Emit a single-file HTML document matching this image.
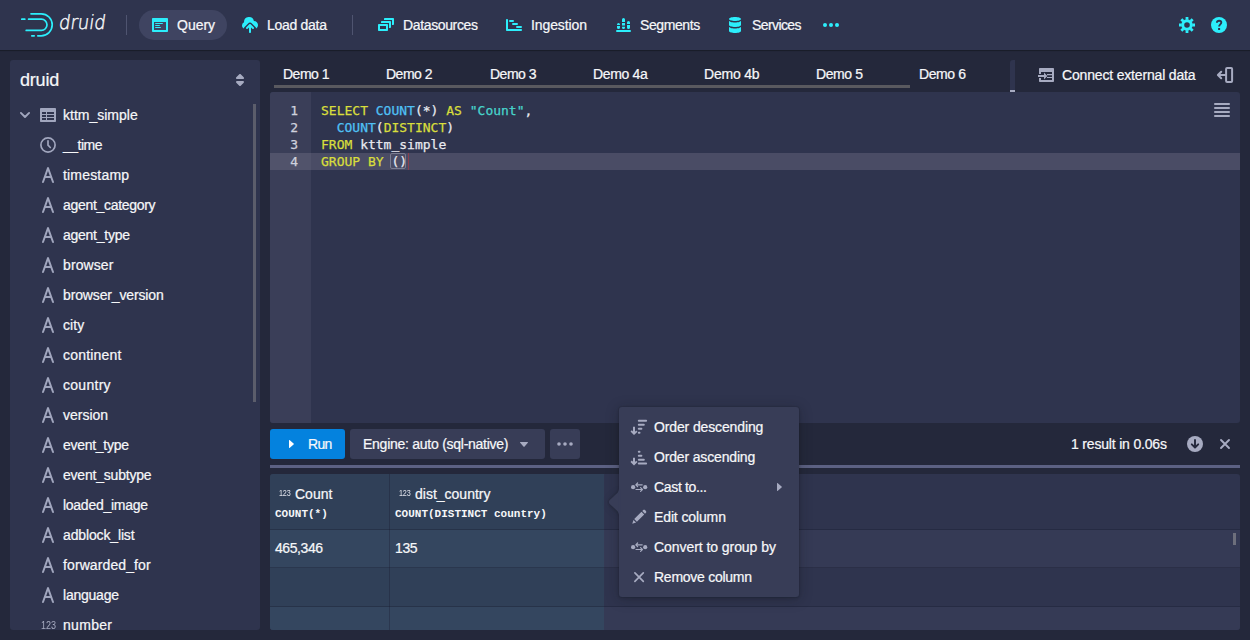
<!DOCTYPE html>
<html lang="en">
<head>
<meta charset="utf-8">
<title>Apache Druid</title>
<style>
*{box-sizing:border-box;margin:0;padding:0}
html,body{width:1250px;height:640px;overflow:hidden;background:#24283b}
body{position:relative;font-family:"Liberation Sans",sans-serif;font-size:14px;color:#f6f7f9;-webkit-font-smoothing:antialiased}
.abs{position:absolute}
.t{position:absolute;white-space:nowrap;line-height:20px;height:20px;-webkit-text-stroke:.22px currentColor}
svg{position:absolute;display:block;overflow:visible}
.cy{fill:#2ceefb}
.gr{fill:#abb0c6}
/* header */
#hdr{left:0;top:0;width:1250px;height:50px;background:#2f344e;box-shadow:0 0 0 1px rgba(17,20,24,.2),0 1px 1px rgba(17,20,24,.4)}
.vdiv{position:absolute;top:15px;width:1px;height:20px;background:#4f5470}
#pill{left:139px;top:10px;width:88px;height:30px;border-radius:15px;background:#3f4461}
/* sidebar */
#side{left:10px;top:60px;width:250px;height:570px;background:#2f344e;border-radius:3px;overflow:hidden}
.row{position:absolute;left:0;width:250px;height:30px}
.row .t{left:53px;top:5px}
/* editor */
#ed{left:270px;top:92px;width:970px;height:331px;background:#2f344e;border-radius:3px;overflow:hidden}
#gut{left:0;top:0;width:41px;height:331px;background:#3a3e58}
.code{font-family:"DejaVu Sans Mono","Liberation Mono",monospace;font-size:13px;line-height:17px;white-space:pre;-webkit-text-stroke:.25px currentColor}
.kw{color:#d8de3c}.fn{color:#4fc1f5}.st{color:#48d5cc}.pl{color:#e9eaf0}
/* table */
#tbl{left:270px;top:474px;width:970px;height:156px;background:#2f344e;border-radius:3px;overflow:hidden}
/* menu */
#menu{left:619px;top:407px;width:180px;height:190px;background:#383d57;border-radius:3px;box-shadow:0 0 0 1px rgba(17,20,24,.06),0 1px 3px rgba(17,20,24,.2),0 2px 14px rgba(17,20,24,.3)}
.mi{position:absolute;left:5px;width:170px;height:30px}
.mi .t{left:30px;top:5px}
</style>
</head>
<body>

<!-- ================= HEADER ================= -->
<div id="hdr" class="abs">
  <div id="pill" class="abs"></div>

  <!-- logo mark -->
  <svg style="left:0;top:0" width="60" height="50" viewBox="0 0 60 50" fill="none" stroke="#2ceefb" stroke-width="1.7" stroke-linecap="round">
    <path d="M31 13.800H41.200A11 11 0 0 1 41.200 35.800H37.800"/>
    <path d="M31.800 35.800H34.200"/>
    <path d="M28.600 19.200H41.400A5.600 5.600 0 0 1 41.400 30.400H26.200"/>
    <path d="M21.800 19.200H24.800"/>
  </svg>
  <!-- application -->
  <svg class="cy" style="left:152px;top:17px" width="16" height="16" viewBox="0 0 16 16"><path d="M3.5 7h7c.28 0 .5-.22.5-.5s-.22-.5-.5-.5h-7c-.28 0-.5.22-.5.5s.22.5.5.5zM15 1H1c-.55 0-1 .45-1 1v12c0 .55.45 1 1 1h14c.55 0 1-.45 1-1V2c0-.55-.45-1-1-1zm-1 12H2V5h12v8zM3.500 9h4c.28 0 .5-.22.5-.5S7.780 8 7.500 8h-4c-.28 0-.5.22-.5.5s.22.5.5.5zm0 2h5c.28 0 .5-.22.5-.5s-.22-.5-.5-.5h-5c-.28 0-.5.22-.5.5s.22.5.5.5z"/></svg>
  <!-- cloud-upload -->
  <svg class="cy" style="left:242px;top:16.500px" width="16" height="16" viewBox="0 0 16 16"><path d="M12 4c-.03 0-.07 0-.1.010A5 5 0 0 0 2 5c0 .11.010.22.020.33A3.500 3.500 0 0 0 0 8.500c0 1.300.7 2.400 1.750 3.020.05-.5.260-.98.620-1.350l3.500-3.500a3 3 0 0 1 4.260 0l3.500 3.500c.36.370.57.850.62 1.350A3.990 3.990 0 0 0 16 8c0-2.210-1.790-4-4-4z"/><path d="M8.710 7.290C8.530 7.110 8.280 7 8 7s-.53.110-.71.290l-3 3a1.003 1.003 0 0 0 1.420 1.420L7 10.410V15c0 .55.450 1 1 1s1-.45 1-1v-4.590l1.290 1.290c.18.190.43.300.71.300a1.003 1.003 0 0 0 .71-1.710l-3-3z"/></svg>
  <!-- multi-select -->
  <svg class="cy" style="left:378px;top:17px" width="16" height="16" viewBox="0 0 16 16"><path d="M12 3.980H4c-.55 0-1 .45-1 1v1h8v5h1c.55 0 1-.45 1-1v-5c0-.55-.45-1-1-1zm3-3H7c-.55 0-1 .45-1 1v1h8v5h1c.55 0 1-.45 1-1v-5c0-.55-.45-1-1-1zm-6 6H1c-.55 0-1 .45-1 1v5c0 .55.450 1 1 1h8c.55 0 1-.45 1-1v-5c0-.55-.45-1-1-1zm-1 5H2v-3h6v3z"/></svg>
  <!-- gantt-chart -->
  <svg class="cy" style="left:506px;top:17px" width="16" height="16" viewBox="0 0 16 16"><path d="M2 12V3c0-.55-.45-1-1-1s-1 .45-1 1v10c0 .55.450 1 1 1h14c.55 0 1-.45 1-1s-.45-1-1-1H2z"/><rect x="3" y="3" width="5" height="2" rx="1"/><rect x="6" y="6" width="6" height="2" rx="1"/><rect x="10" y="9" width="6" height="2" rx="1"/></svg>
  <!-- stacked-chart -->
  <svg class="cy" style="left:616px;top:17px" width="16" height="16" viewBox="0 0 16 16"><rect x="0" y="13" width="15" height="2" rx="1"/><path d="M1 8V7.500a1.500 1.500 0 0 1 3 0V8zM1 9h3v1.500a1.500 1.500 0 0 1-3 0zM6 5V2.500a1.500 1.500 0 0 1 3 0V5zM6 6h3v2.500H6zM6 9.700h3v.7a1.500 1.500 0 0 1-3 0zM11 7V5.500a1.500 1.500 0 0 1 3 0V7zM11 8h3v2.500a1.500 1.500 0 0 1-3 0z"/></svg>
  <!-- database -->
  <svg class="cy" style="left:727px;top:17px" width="16" height="16" viewBox="0 0 16 16"><path d="M8 4c3.310 0 6-.9 6-2s-2.690-2-6-2C4.680 0 2 .9 2 2s2.680 2 6 2zm-6-.48V8c0 1.100 2.690 2 6 2s6-.9 6-2V3.520C14 4.620 11.310 5.520 8 5.520S2 4.620 2 3.520zm0 6V14c0 1.100 2.690 2 6 2s6-.9 6-2V9.520c0 1.100-2.690 2-6 2s-6-.9-6-2z"/></svg>
  <!-- more -->
  <svg class="cy" style="left:823px;top:17px" width="16" height="16" viewBox="0 0 16 16"><circle cx="2" cy="8" r="2"/><circle cx="8" cy="8" r="2"/><circle cx="14" cy="8" r="2"/></svg>
  <!-- cog -->
  <svg style="left:1179px;top:17px" width="16" height="16" viewBox="0 0 16 16" fill="none" stroke="#2ceefb"><path stroke-width="2.800" d="M13.20 8.00L16.00 8.00M11.68 11.68L13.66 13.66M8.00 13.20L8.00 16.00M4.32 11.68L2.34 13.66M2.80 8.00L0.00 8.00M4.32 4.32L2.34 2.34M8.00 2.80L8.00 0.00M11.68 4.32L13.66 2.34"/><circle cx="8" cy="8" r="4.250" stroke-width="2.900"/></svg>
  <!-- help -->
  <svg style="left:1211px;top:17px" width="16" height="16" viewBox="0 0 16 16"><circle cx="8" cy="8" r="8" fill="#2ceefb"/><path d="M5.900 5.700C6 4.300 6.900 3.700 8.100 3.700c1.300 0 2.200.7 2.200 1.900 0 1.700-2.200 1.900-2.200 3.900" fill="none" stroke="#2f344e" stroke-width="1.900"/><rect x="7.100" y="11" width="2" height="2" fill="#2f344e"/></svg>
  <div class="vdiv" style="left:126px"></div>
  <div class="vdiv" style="left:352px"></div>
  <div class="t" id="logo" style="left:57.500px;top:9px;font-family:'DejaVu Sans Light','DejaVu Sans','Liberation Sans',sans-serif;font-weight:200;font-size:19.500px;line-height:28px;height:28px;-webkit-text-stroke:.45px #f6f7f9;margin-top:0;transform-origin:0 22px;transform:skewX(-8deg) scaleX(.92)">druid</div>
  <div class="t" style="left:177px;top:15px">Query</div>
  <div class="t" style="left:267px;top:15px;letter-spacing:-0.29px">Load data</div>
  <div class="t" style="left:403px;top:15px;letter-spacing:-0.36px">Datasources</div>
  <div class="t" style="left:531px;top:15px;letter-spacing:-0.1px">Ingestion</div>
  <div class="t" style="left:640px;top:15px;letter-spacing:-0.41px">Segments</div>
  <div class="t" style="left:752px;top:15px;letter-spacing:-0.6px">Services</div>
</div>

<!-- ================= SIDEBAR ================= -->
<div id="side" class="abs">
  <div class="t" style="left:10px;top:8px;font-size:18px;line-height:24px;height:24px;letter-spacing:-.2px">druid</div>
  <svg style="left:222px;top:12px" width="16" height="16" viewBox="0 0 16 16" fill="#a7abc1"><path d="M5 7h6a1.003 1.003 0 0 0 .71-1.710l-3-3C8.530 2.110 8.280 2 8 2s-.53.110-.71.290l-3 3A1.003 1.003 0 0 0 5 7zm6 2H5a1.003 1.003 0 0 0-.71 1.710l3 3c.18.180.43.290.71.290s.53-.11.710-.29l3-3A1.003 1.003 0 0 0 11 9z"/></svg>
  <div class="row" style="top:40px"><svg style="left:9px;top:11px" width="12" height="8" viewBox="0 0 12 8" fill="none" stroke="#a1a6be" stroke-width="1.900" stroke-linecap="round" stroke-linejoin="round"><path d="M1.900 1.900L6 6L10.100 1.900"/></svg><svg style="left:30px;top:7px" width="16" height="16" viewBox="0 0 16 16" fill="#a1a6be"><path d="M15 1H1c-.6 0-1 .5-1 1v12c0 .6.400 1 1 1h14c.6 0 1-.4 1-1V2c0-.5-.4-1-1-1zM6 13H2v-2h4v2zm0-3H2V8h4v2zm0-3H2V5h4v2zm8 6H7v-2h7v2zm0-3H7V8h7v2zm0-3H7V5h7v2z"/></svg><div class="t">kttm_simple</div></div>
  <div class="row" style="top:70px"><svg style="left:30px;top:7px" width="16" height="16" viewBox="0 0 16 16" fill="none" stroke="#a1a6be" stroke-width="1.700" stroke-linecap="round" stroke-linejoin="round"><circle cx="8" cy="8" r="7.100"/><path d="M8 3.800V8.200L10.300 10.500"/></svg><div class="t" style="letter-spacing:-0.51px">__time</div></div>
  <div class="row" style="top:100px"><svg style="left:30px;top:7px" width="16" height="16" viewBox="0 0 16 16" fill="#a1a6be"><path d="M13.930 14.670L8.940.670h-.010C8.790.280 8.440 0 8 0s-.79.280-.93.670h-.010l-5 14h.010c-.04.100-.07.210-.07.330 0 .55.450 1 1 1 .44 0 .79-.28.930-.67h.010L5.490 11h5.020l1.550 4.340h.010c.14.380.49.660.93.660.55 0 1-.45 1-1 0-.12-.03-.23-.07-.33zM6.200 9L8 3.970 9.800 9H6.200z"/></svg><div class="t" style="letter-spacing:0.18px">timestamp</div></div>
  <div class="row" style="top:130px"><svg style="left:30px;top:7px" width="16" height="16" viewBox="0 0 16 16" fill="#a1a6be"><path d="M13.930 14.670L8.940.670h-.010C8.790.280 8.440 0 8 0s-.79.280-.93.670h-.010l-5 14h.010c-.04.100-.07.210-.07.330 0 .55.450 1 1 1 .44 0 .79-.28.930-.67h.010L5.490 11h5.020l1.550 4.340h.010c.14.380.49.660.93.660.55 0 1-.45 1-1 0-.12-.03-.23-.07-.33zM6.200 9L8 3.970 9.800 9H6.200z"/></svg><div class="t" style="letter-spacing:-0.3px">agent_category</div></div>
  <div class="row" style="top:160px"><svg style="left:30px;top:7px" width="16" height="16" viewBox="0 0 16 16" fill="#a1a6be"><path d="M13.930 14.670L8.940.670h-.010C8.790.280 8.440 0 8 0s-.79.280-.93.670h-.010l-5 14h.010c-.04.100-.07.210-.07.330 0 .55.450 1 1 1 .44 0 .79-.28.930-.67h.010L5.490 11h5.020l1.550 4.340h.010c.14.380.49.660.93.660.55 0 1-.45 1-1 0-.12-.03-.23-.07-.33zM6.200 9L8 3.970 9.800 9H6.200z"/></svg><div class="t" style="letter-spacing:-0.26px">agent_type</div></div>
  <div class="row" style="top:190px"><svg style="left:30px;top:7px" width="16" height="16" viewBox="0 0 16 16" fill="#a1a6be"><path d="M13.930 14.670L8.940.670h-.010C8.790.280 8.440 0 8 0s-.79.280-.93.670h-.010l-5 14h.010c-.04.100-.07.210-.07.330 0 .55.450 1 1 1 .44 0 .79-.28.930-.67h.010L5.490 11h5.020l1.550 4.340h.010c.14.380.49.660.93.660.55 0 1-.45 1-1 0-.12-.03-.23-.07-.33zM6.200 9L8 3.970 9.800 9H6.200z"/></svg><div class="t" style="letter-spacing:0.1px">browser</div></div>
  <div class="row" style="top:220px"><svg style="left:30px;top:7px" width="16" height="16" viewBox="0 0 16 16" fill="#a1a6be"><path d="M13.930 14.670L8.940.670h-.010C8.790.280 8.440 0 8 0s-.79.280-.93.670h-.010l-5 14h.010c-.04.100-.07.210-.07.330 0 .55.450 1 1 1 .44 0 .79-.28.930-.67h.010L5.490 11h5.020l1.550 4.340h.010c.14.380.49.660.93.660.55 0 1-.45 1-1 0-.12-.03-.23-.07-.33zM6.200 9L8 3.970 9.800 9H6.200z"/></svg><div class="t" style="letter-spacing:-0.14px">browser_version</div></div>
  <div class="row" style="top:250px"><svg style="left:30px;top:7px" width="16" height="16" viewBox="0 0 16 16" fill="#a1a6be"><path d="M13.930 14.670L8.940.670h-.010C8.790.280 8.440 0 8 0s-.79.280-.93.670h-.010l-5 14h.010c-.04.100-.07.210-.07.330 0 .55.450 1 1 1 .44 0 .79-.28.930-.67h.010L5.490 11h5.020l1.550 4.340h.010c.14.380.49.660.93.660.55 0 1-.45 1-1 0-.12-.03-.23-.07-.33zM6.200 9L8 3.970 9.800 9H6.200z"/></svg><div class="t" style="letter-spacing:0.1px">city</div></div>
  <div class="row" style="top:280px"><svg style="left:30px;top:7px" width="16" height="16" viewBox="0 0 16 16" fill="#a1a6be"><path d="M13.930 14.670L8.940.670h-.010C8.790.280 8.440 0 8 0s-.79.280-.93.670h-.010l-5 14h.010c-.04.100-.07.210-.07.330 0 .55.450 1 1 1 .44 0 .79-.28.930-.67h.010L5.490 11h5.020l1.550 4.340h.010c.14.380.49.660.93.660.55 0 1-.45 1-1 0-.12-.03-.23-.07-.33zM6.200 9L8 3.970 9.800 9H6.200z"/></svg><div class="t" style="letter-spacing:0.21px">continent</div></div>
  <div class="row" style="top:310px"><svg style="left:30px;top:7px" width="16" height="16" viewBox="0 0 16 16" fill="#a1a6be"><path d="M13.930 14.670L8.940.670h-.010C8.790.280 8.440 0 8 0s-.79.280-.93.670h-.010l-5 14h.010c-.04.100-.07.210-.07.330 0 .55.450 1 1 1 .44 0 .79-.28.930-.67h.010L5.490 11h5.020l1.550 4.340h.010c.14.380.49.660.93.660.55 0 1-.45 1-1 0-.12-.03-.23-.07-.33zM6.200 9L8 3.970 9.800 9H6.200z"/></svg><div class="t" style="letter-spacing:0.28px">country</div></div>
  <div class="row" style="top:340px"><svg style="left:30px;top:7px" width="16" height="16" viewBox="0 0 16 16" fill="#a1a6be"><path d="M13.930 14.670L8.940.670h-.010C8.790.280 8.440 0 8 0s-.79.280-.93.670h-.010l-5 14h.010c-.04.100-.07.210-.07.330 0 .55.450 1 1 1 .44 0 .79-.28.930-.67h.010L5.490 11h5.020l1.550 4.340h.010c.14.380.49.660.93.660.55 0 1-.45 1-1 0-.12-.03-.23-.07-.33zM6.200 9L8 3.970 9.800 9H6.200z"/></svg><div class="t">version</div></div>
  <div class="row" style="top:370px"><svg style="left:30px;top:7px" width="16" height="16" viewBox="0 0 16 16" fill="#a1a6be"><path d="M13.930 14.670L8.940.670h-.010C8.790.280 8.440 0 8 0s-.79.280-.93.670h-.010l-5 14h.010c-.04.100-.07.210-.07.330 0 .55.450 1 1 1 .44 0 .79-.28.930-.67h.010L5.490 11h5.020l1.550 4.340h.010c.14.380.49.660.93.660.55 0 1-.45 1-1 0-.12-.03-.23-.07-.33zM6.200 9L8 3.970 9.800 9H6.200z"/></svg><div class="t" style="letter-spacing:-0.28px">event_type</div></div>
  <div class="row" style="top:400px"><svg style="left:30px;top:7px" width="16" height="16" viewBox="0 0 16 16" fill="#a1a6be"><path d="M13.930 14.670L8.940.670h-.010C8.790.280 8.440 0 8 0s-.79.280-.93.670h-.010l-5 14h.010c-.04.100-.07.210-.07.330 0 .55.450 1 1 1 .44 0 .79-.28.930-.67h.010L5.490 11h5.020l1.550 4.340h.010c.14.380.49.660.93.660.55 0 1-.45 1-1 0-.12-.03-.23-.07-.33zM6.200 9L8 3.970 9.800 9H6.200z"/></svg><div class="t" style="letter-spacing:-0.21px">event_subtype</div></div>
  <div class="row" style="top:430px"><svg style="left:30px;top:7px" width="16" height="16" viewBox="0 0 16 16" fill="#a1a6be"><path d="M13.930 14.670L8.940.670h-.010C8.790.280 8.440 0 8 0s-.79.280-.93.670h-.010l-5 14h.010c-.04.100-.07.210-.07.330 0 .55.450 1 1 1 .44 0 .79-.28.930-.67h.010L5.490 11h5.020l1.550 4.340h.010c.14.380.49.660.93.660.55 0 1-.45 1-1 0-.12-.03-.23-.07-.33zM6.200 9L8 3.970 9.800 9H6.200z"/></svg><div class="t" style="letter-spacing:-0.27px">loaded_image</div></div>
  <div class="row" style="top:460px"><svg style="left:30px;top:7px" width="16" height="16" viewBox="0 0 16 16" fill="#a1a6be"><path d="M13.930 14.670L8.940.670h-.010C8.790.280 8.440 0 8 0s-.79.280-.93.670h-.010l-5 14h.010c-.04.100-.07.210-.07.330 0 .55.450 1 1 1 .44 0 .79-.28.930-.67h.010L5.490 11h5.020l1.550 4.340h.010c.14.380.49.660.93.660.55 0 1-.45 1-1 0-.12-.03-.23-.07-.33zM6.200 9L8 3.970 9.800 9H6.200z"/></svg><div class="t" style="letter-spacing:-0.14px">adblock_list</div></div>
  <div class="row" style="top:490px"><svg style="left:30px;top:7px" width="16" height="16" viewBox="0 0 16 16" fill="#a1a6be"><path d="M13.930 14.670L8.940.670h-.010C8.790.280 8.440 0 8 0s-.79.280-.93.670h-.010l-5 14h.010c-.04.100-.07.210-.07.330 0 .55.450 1 1 1 .44 0 .79-.28.930-.67h.010L5.490 11h5.020l1.550 4.340h.010c.14.380.49.660.93.660.55 0 1-.45 1-1 0-.12-.03-.23-.07-.33zM6.200 9L8 3.970 9.800 9H6.200z"/></svg><div class="t" style="letter-spacing:0.1px">forwarded_for</div></div>
  <div class="row" style="top:520px"><svg style="left:30px;top:7px" width="16" height="16" viewBox="0 0 16 16" fill="#a1a6be"><path d="M13.930 14.670L8.940.670h-.010C8.790.280 8.440 0 8 0s-.79.280-.93.670h-.010l-5 14h.010c-.04.100-.07.210-.07.330 0 .55.450 1 1 1 .44 0 .79-.28.930-.67h.010L5.490 11h5.020l1.550 4.340h.010c.14.380.49.660.93.660.55 0 1-.45 1-1 0-.12-.03-.23-.07-.33zM6.200 9L8 3.970 9.800 9H6.200z"/></svg><div class="t" style="letter-spacing:-0.23px">language</div></div>
  <div class="row" style="top:550px"><div class="t" style="left:30.500px;top:6px;font-size:10px;letter-spacing:0;-webkit-text-stroke:0;color:#a7abc1;transform-origin:0 50%;transform:scaleX(.9)">123</div><div class="t" style="letter-spacing:0.31px">number</div></div>
  <div class="abs" style="left:243px;top:44px;width:3px;height:298px;background:#5b5d6b"></div>
</div>

<!-- ================= TABS ================= -->
<div class="t" style="left:283px;top:64px;letter-spacing:-0.51px">Demo 1</div>
<div class="t" style="left:386px;top:64px;letter-spacing:-0.51px">Demo 2</div>
<div class="t" style="left:490px;top:64px;letter-spacing:-0.51px">Demo 3</div>
<div class="t" style="left:593px;top:64px;letter-spacing:-0.34px">Demo 4a</div>
<div class="t" style="left:704px;top:64px;letter-spacing:-0.2px">Demo 4b</div>
<div class="t" style="left:816px;top:64px;letter-spacing:-0.41px">Demo 5</div>
<div class="t" style="left:919px;top:64px;letter-spacing:-0.41px">Demo 6</div>
<div class="abs" style="left:274px;top:85px;width:636px;height:3px;background:#59595f"></div>
<div class="abs" style="left:1010px;top:60px;width:5px;height:30px;background:#2f344e;border-radius:3px 0 0 0"></div>
<div class="abs" style="left:1010px;top:90px;width:5px;height:2px;background:#a7abc1"></div>
<div class="t" style="left:1062px;top:65px;letter-spacing:-0.17px">Connect external data</div>

<!-- ================= EDITOR ================= -->
<div id="ed" class="abs">
  <div id="gut" class="abs"></div>
  <div class="abs" style="left:0;top:61px;width:41px;height:17px;background:#51536b"></div>
  <div class="abs" style="left:41px;top:61px;width:929px;height:17px;background:#4a4c65"></div>
  <div class="abs code" style="left:0;top:10px;width:28px;text-align:right;color:#cfd1dd">1
2
3
4</div>
  <div class="abs" style="left:120px;top:61px;width:16px;height:16px;border:1px solid #7a7d92;border-radius:2px"></div>
  <div class="abs" style="left:138px;top:61px;width:1px;height:17px;background:#8c3f4e"></div>
  <div class="abs code pl" style="left:51px;top:10px"><span class="kw">SELECT</span> <span class="fn">COUNT</span>(*) <span class="kw">AS</span> <span class="st">"Count"</span>,
  <span class="fn">COUNT</span>(<span class="kw">DISTINCT</span>)
<span class="kw">FROM</span> kttm_simple
<span class="kw">GROUP BY</span> ()</div>
</div>


<!-- th-derived -->
<svg style="left:1038px;top:67px" width="17" height="16" viewBox="0 0 17 16"><path fill="#a7abc1" fill-rule="evenodd" d="M2 1h13c.55 0 1 .45 1 1v12c0 .55-.45 1-1 1H2c-.55 0-1-.45-1-1v-3h2v2h11V5H3v2H1V2c0-.55.450-1 1-1z"/><path fill="#a7abc1" d="M9 7h5v1.200H9zM9 9.900h5v1.200H9z"/><path fill="#a7abc1" d="M0 8h6V5.600L9.400 9 6 12.400V10H0z"/></svg>
<!-- collapse panel -->
<svg style="left:1216px;top:66px" width="18" height="18" viewBox="0 0 18 18" fill="none" stroke="#a7abc1" stroke-width="2" stroke-linecap="round" stroke-linejoin="round"><rect x="10.100" y="2" width="6" height="14" rx="1"/><path d="M9.500 9H2.200M5.200 5.700L1.900 9l3.300 3.300"/></svg>
<!-- editor menu -->
<svg style="left:1214px;top:103px" width="16" height="14" viewBox="0 0 16 14" fill="#a7abc1"><rect x="0" y="0" width="16" height="1.900" rx=".9"/><rect x="0" y="4" width="16" height="1.900" rx=".9"/><rect x="0" y="8" width="16" height="1.900" rx=".9"/><rect x="0" y="12" width="16" height="1.900" rx=".9"/></svg>

<!-- ================= RUN BAR ================= -->
<div class="abs" style="left:270px;top:429px;width:75px;height:30px;background:#0482de;border-radius:3px"></div>
<div class="t" style="left:308px;top:434px;letter-spacing:-0.7px">Run</div>
<div class="abs" style="left:350px;top:429px;width:195px;height:30px;background:#383d57;border-radius:3px"></div>
<div class="t" style="left:363px;top:434px;letter-spacing:-0.26px">Engine: auto (sql-native)</div>
<div class="abs" style="left:550px;top:429px;width:30px;height:30px;background:#383d57;border-radius:3px"></div>
<div class="t" style="left:1071px;top:434px;letter-spacing:-0.18px">1 result in 0.06s</div>

<svg style="left:283px;top:436px" width="16" height="16" viewBox="0 0 16 16" fill="#fff"><path d="M11 8c0-.15-.07-.28-.17-.37l-4-3.500A.495.495 0 0 0 6 4.500v7a.495.495 0 0 0 .83.370l4-3.500c.1-.9.170-.22.170-.37z"/></svg>
<svg style="left:516px;top:436px" width="16" height="16" viewBox="0 0 16 16" fill="#a7abc1"><path d="M12 6.500c0-.28-.22-.5-.5-.5h-7a.495.495 0 0 0-.37.830l3.500 4c.9.100.22.170.37.170s.28-.7.370-.17l3.500-4c.08-.9.130-.2.130-.33z"/></svg>
<svg style="left:557px;top:436px" width="16" height="16" viewBox="0 0 16 16" fill="#a7abc1"><circle cx="2" cy="8" r="1.800"/><circle cx="8" cy="8" r="1.800"/><circle cx="14" cy="8" r="1.800"/></svg>
<svg style="left:1187px;top:436px" width="16" height="16" viewBox="0 0 16 16"><circle cx="8" cy="8" r="8" fill="#a7abc1"/><path d="M8 4v7.300M4.800 8.300L8 11.500l3.200-3.200" fill="none" stroke="#24283b" stroke-width="1.900" stroke-linecap="round" stroke-linejoin="round"/></svg>
<svg style="left:1217px;top:436px" width="16" height="16" viewBox="0 0 16 16" fill="none" stroke="#a7abc1" stroke-width="1.900" stroke-linecap="round"><path d="M4 4l8 8M12 4l-8 8"/></svg>
<div class="abs" style="left:270px;top:465px;width:970px;height:3px;background:#5c6183"></div>

<!-- ================= TABLE ================= -->
<div id="tbl" class="abs">
  <div class="abs" style="left:0;top:0;width:334px;height:156px;background:#304058"></div>
  <div class="abs" style="left:0;top:56px;width:334px;height:38px;background:#34465f"></div>
  <div class="abs" style="left:334px;top:56px;width:636px;height:38px;background:#353a55"></div>
  <div class="abs" style="left:0;top:133px;width:334px;height:23px;background:#34465f"></div>
  <div class="abs" style="left:334px;top:133px;width:636px;height:23px;background:#353a55"></div>
  <div class="abs" style="left:119px;top:0;width:1px;height:156px;background:rgba(22,24,42,.3)"></div>
  <div class="abs" style="left:0;top:55px;width:970px;height:1px;background:rgba(22,24,42,.32)"></div>
  <div class="abs" style="left:0;top:93px;width:970px;height:1px;background:rgba(22,24,42,.32)"></div>
  <div class="abs" style="left:0;top:132px;width:970px;height:1px;background:rgba(22,24,42,.32)"></div>
  <div class="t" style="left:8.500px;top:9px;font-size:9px;letter-spacing:-.2px;-webkit-text-stroke:0;color:#e1e3ec;transform-origin:0 50%;transform:scaleX(.8)">123</div><div class="t" style="left:25px;top:10px">Count</div>
  <div class="t" style="left:128.500px;top:9px;font-size:9px;letter-spacing:-.2px;-webkit-text-stroke:0;color:#e1e3ec;transform-origin:0 50%;transform:scaleX(.8)">123</div><div class="t" style="left:145px;top:10px">dist_country</div>
  <div class="t" style="left:5px;top:30px;font-family:'Liberation Mono',monospace;font-weight:bold;font-size:11px;-webkit-text-stroke:0">COUNT(*)</div>
  <div class="t" style="left:125px;top:30px;font-family:'Liberation Mono',monospace;font-weight:bold;font-size:11px;-webkit-text-stroke:0">COUNT(DISTINCT country)</div>
  <div class="t" style="left:5px;top:64px;letter-spacing:-0.43px">465,346</div>
  <div class="t" style="left:125px;top:64px;letter-spacing:-0.38px">135</div>
  <div class="abs" style="left:963px;top:59px;width:3px;height:12px;background:#6d6f7c"></div>
</div>

<!-- ================= MENU ================= -->
<svg style="left:609px;top:486.500px;filter:drop-shadow(0 0 1px rgba(17,20,24,.35)) drop-shadow(0 1px 3px rgba(17,20,24,.25))" width="30" height="30" viewBox="0 0 30 30"><path d="M8.110 6.302c1.015-.936 1.887-2.922 1.887-4.297v26c0-1.378-.868-3.357-1.888-4.297L.925 17.090c-1.237-1.140-1.233-3.034 0-4.170L8.110 6.302z" fill="#383d57"/></svg>
<div id="menu" class="abs">
  <div class="mi" style="top:5px"><svg style="left:7px;top:7px" width="16" height="16" viewBox="0 0 16 16" fill="#a7abc1"><path d="M2 7.7h2v5.0l1.200-1.200 1.300 1.300L3 16.1-.5 12.6l1.300-1.300 1.200 1.200z"/><rect x="6.800" y=".7" width="9.300" height="2" rx="1"/><rect x="6.800" y="4.700" width="7" height="2" rx="1"/><rect x="6.800" y="8.700" width="4.600" height="2" rx="1"/><rect x="6.800" y="12.700" width="2.700" height="2" rx="1"/></svg><div class="t" style="letter-spacing:-0.13px">Order descending</div></div>
  <div class="mi" style="top:35px"><svg style="left:7px;top:7px" width="16" height="16" viewBox="0 0 16 16" fill="#a7abc1"><path d="M2 8.7h2v4.3l1.200-1.200 1.300 1.300L3 16.4-.5 12.9l1.300-1.300 1.200 1.200z"/><rect x="6.800" y="1.700" width="2.700" height="2" rx="1"/><rect x="6.800" y="5.700" width="4.600" height="2" rx="1"/><rect x="6.800" y="9.700" width="7" height="2" rx="1"/><rect x="6.800" y="13.500" width="9.300" height="2" rx="1"/></svg><div class="t" style="letter-spacing:-0.16px">Order ascending</div></div>
  <div class="mi" style="top:65px"><svg style="left:7px;top:7px" width="16" height="16" viewBox="0 0 16 16" fill="#a7abc1"><circle cx="2.100" cy="8.200" r="2.100"/><circle cx="14.200" cy="8.200" r="2.100"/><path d="M4.800 5.800h6.400M6.600 4L4.800 5.800l1.800 1.800M11.400 10.500H5M9.600 8.700l1.800 1.800-1.800 1.800" fill="none" stroke="#a7abc1" stroke-width="1.200" stroke-linecap="round" stroke-linejoin="round"/></svg><div class="t" style="letter-spacing:-0.34px">Cast to...</div><svg style="left:147px;top:7px" width="16" height="16" viewBox="0 0 16 16" fill="#a7abc1"><path d="M11 8c0-.15-.07-.28-.17-.37l-4-3.500A.495.495 0 0 0 6 4.500v7a.495.495 0 0 0 .83.370l4-3.500c.1-.9.170-.22.170-.37z"/></svg></div>
  <div class="mi" style="top:95px"><svg style="left:7px;top:7px" width="16" height="16" viewBox="0 0 16 16" fill="#a7abc1"><path d="M1.300 14.700l1.100-3.800 2.700 2.700zM3.200 10.100l7.300-7.300 2.700 2.700-7.300 7.300zM11.300 2l.9-.9c.5-.5 1.300-.5 1.800 0l.9.900c.5.500.5 1.300 0 1.800l-.9.900z"/></svg><div class="t" style="letter-spacing:-0.12px">Edit column</div></div>
  <div class="mi" style="top:125px"><svg style="left:7px;top:7px" width="16" height="16" viewBox="0 0 16 16" fill="#a7abc1"><circle cx="2.100" cy="8.200" r="2.100"/><circle cx="14.200" cy="8.200" r="2.100"/><path d="M4.800 5.800h6.400M6.600 4L4.800 5.800l1.800 1.800M11.400 10.500H5M9.600 8.700l1.800 1.800-1.800 1.800" fill="none" stroke="#a7abc1" stroke-width="1.200" stroke-linecap="round" stroke-linejoin="round"/></svg><div class="t" style="letter-spacing:-0.06px">Convert to group by</div></div>
  <div class="mi" style="top:155px"><svg style="left:7px;top:7px" width="16" height="16" viewBox="0 0 16 16" fill="none" stroke="#a7abc1" stroke-width="1.700" stroke-linecap="round"><path d="M3.900 3.900l8.400 8.400M12.300 3.900l-8.400 8.400"/></svg><div class="t" style="letter-spacing:-0.26px">Remove column</div></div>
</div>
<svg style="left:609px;top:486.500px" width="30" height="30" viewBox="0 0 30 30"><path d="M8.110 6.302c1.015-.936 1.887-2.922 1.887-4.297v26c0-1.378-.868-3.357-1.888-4.297L.925 17.090c-1.237-1.140-1.233-3.034 0-4.170L8.110 6.302z" fill="#383d57"/><rect x="9.900" y="2" width="1.200" height="26" fill="#383d57"/></svg>

</body>
</html>
